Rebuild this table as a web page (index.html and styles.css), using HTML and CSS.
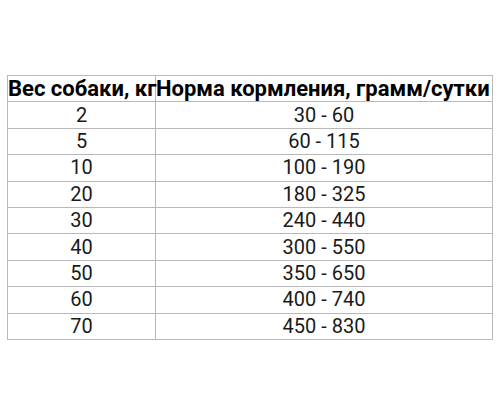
FILE: index.html
```html
<!DOCTYPE html>
<html lang="ru">
<head>
<meta charset="utf-8">
<link rel="stylesheet" href="styles.css">
</head>
<body>
<div class="page">
<table class="feed">
<thead>
<tr><th class="c1">Вес собаки, кг</th><th class="c2">Норма кормления, грамм/сутки</th></tr>
</thead>
<tbody>
<tr><td>2</td><td>30 - 60</td></tr>
<tr><td>5</td><td>60 - 115</td></tr>
<tr><td>10</td><td>100 - 190</td></tr>
<tr><td>20</td><td>180 - 325</td></tr>
<tr><td>30</td><td>240 - 440</td></tr>
<tr><td>40</td><td>300 - 550</td></tr>
<tr><td>50</td><td>350 - 650</td></tr>
<tr><td>60</td><td>400 - 740</td></tr>
<tr><td>70</td><td>450 - 830</td></tr>
</tbody>
</table>
</div>
</body>
</html>
```
FILE: styles.css
```css
html, body {
  margin: 0;
  padding: 0;
  background: #fff;
}
.page {
  padding: 75px 0 0 7px;
}
.feed {
  border-collapse: collapse;
  font-family: Roboto, "Liberation Sans", sans-serif;
  font-size: 20px;
  color: #1a1a1a;
  table-layout: fixed;
  width: 485px;
}
.feed th, .feed td {
  border: 1px solid #b8b8b8;
  height: 25.4px;
  padding: 0;
  line-height: 25px;
  white-space: nowrap;
  overflow: visible;
}
.feed th {
  font-size: 22px;
  font-weight: 700;
  text-align: left;
  color: #000;
}
.feed td {
  text-align: center;
  font-weight: 400;
}
.c1 { width: 147px; }
.c2 { width: 336px; }
```
